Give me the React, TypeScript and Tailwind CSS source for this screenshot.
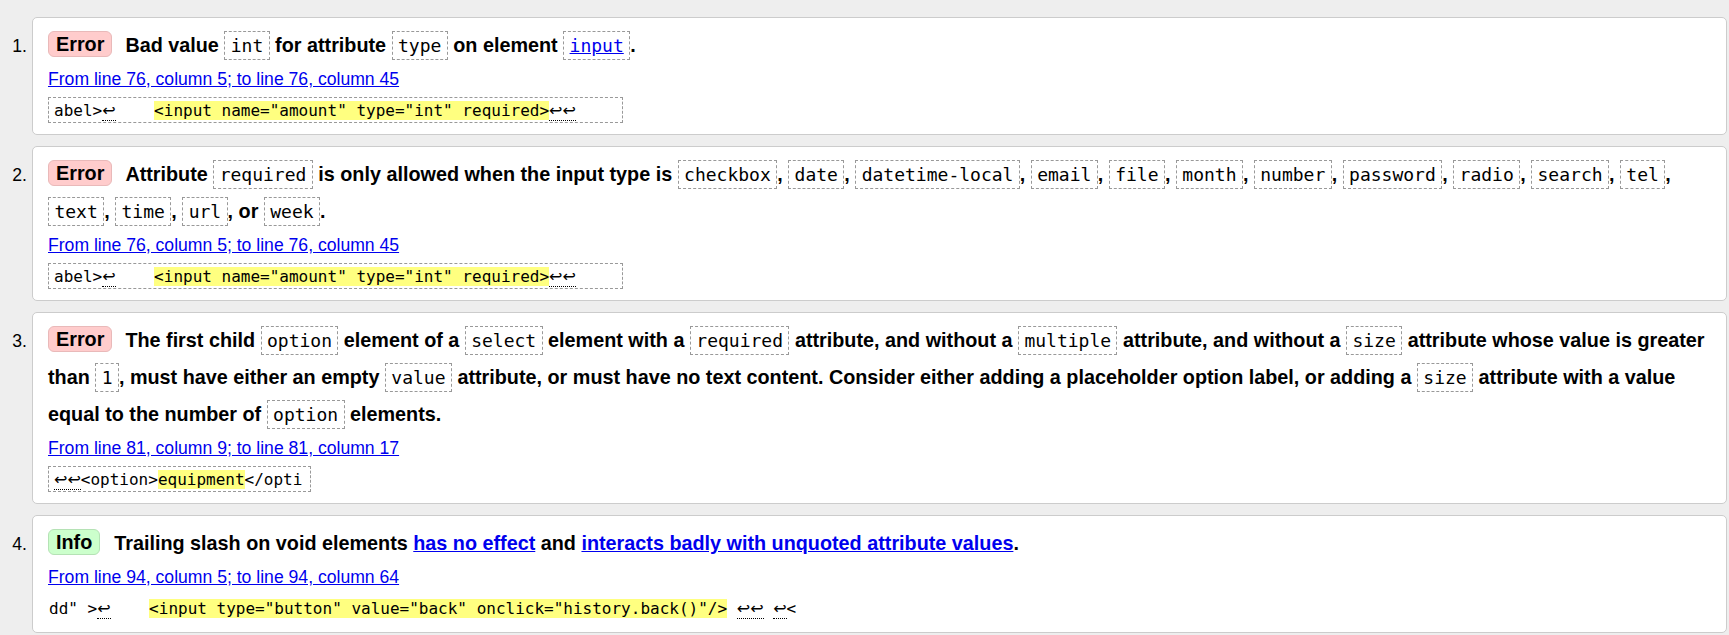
import React from "react";

const sans = { fontFamily: '"Liberation Sans", Arial, sans-serif' };

function C({ children }: { children: React.ReactNode }) {
  return (
    <code className="border border-dashed border-[#999] px-[5.4px] py-[3px] font-normal text-[18px] [font-family:'DejaVu_Sans_Mono',monospace]">
      {children}
    </code>
  );
}

function Ret({ n = 1 }: { n?: number }) {
  return (
    <span className="border-b border-dotted border-black [font-family:'DejaVu_Sans',sans-serif]">
      {"↩".repeat(n)}
    </span>
  );
}

function Hl({ children }: { children: React.ReactNode }) {
  return <span className="bg-[#ffff80]">{children}</span>;
}

function Badge({ kind }: { kind: "Error" | "Info" }) {
  const cls =
    kind === "Error"
      ? "bg-[#ffcccc] border-[#e9b9b9] mr-[13px]"
      : "bg-[#ccffcc] border-[#b5e2b5] mr-[14px]";
  return (
    <span className={`inline-block rounded-[6px] border px-[7px] leading-[24px] align-[1px] ${cls}`}>
      {kind}
    </span>
  );
}

function Item({
  n,
  kind,
  message,
  location,
  extract,
  boxed = true,
}: {
  n: number;
  kind: "Error" | "Info";
  message: React.ReactNode;
  location: string;
  extract: React.ReactNode;
  boxed?: boolean;
}) {
  return (
    <li className="flex items-baseline">
      <div className="w-[32px] shrink-0 pr-[5px] text-right text-[17.6px] text-black">{n}.</div>
      <div className="flex-1 rounded-[5px] border border-[#cccccc] bg-white pt-[9px] pb-[11px] pl-[15px] pr-[6px]">
        <p className="whitespace-nowrap text-[19.8px] font-bold leading-[37px] text-black">
          <Badge kind={kind} />
          {message}
        </p>
        <p className="mt-[2px] text-[17.6px] leading-[26px]">
          <a href="#" className="text-[#0000ee] underline">
            {location}
          </a>
        </p>
        <div
          className={`mt-[5px] w-fit whitespace-pre pt-[4px] pb-[2px] text-[16px] leading-[18px] text-black [font-family:'DejaVu_Sans_Mono',monospace] ${
            boxed ? "border border-dashed border-[#999] pl-[5px] pr-[8px]" : "border-y border-transparent pl-[1px]"
          }`}
        >
          {extract}
        </div>
      </div>
    </li>
  );
}

export default function App() {
  const amountExtract = (
    <>
      abel&gt;
      <Ret />
      {"    "}
      <Hl>&lt;input name="amount" type="int" required&gt;</Hl>
      <Ret n={2} />
      {"    "}
    </>
  );

  return (
    <div className="h-[635px] overflow-hidden bg-[#eeeeee] pt-[17px] pr-[2px]" style={sans}>
      <ol className="flex flex-col gap-[11px]">
        <Item
          n={1}
          kind="Error"
          message={
            <>
              Bad value <C>int</C> for attribute <C>type</C> on element{" "}
              <C>
                <a href="#" className="text-[#0000ee] underline">
                  input
                </a>
              </C>
              .
            </>
          }
          location="From line 76, column 5; to line 76, column 45"
          extract={amountExtract}
        />
        <Item
          n={2}
          kind="Error"
          message={
            <>
              Attribute <C>required</C> is only allowed when the input type is <C>checkbox</C>, <C>date</C>,{" "}
              <C>datetime-local</C>, <C>email</C>, <C>file</C>, <C>month</C>, <C>number</C>, <C>password</C>,{" "}
              <C>radio</C>, <C>search</C>, <C>tel</C>,
              <br />
              <C>text</C>, <C>time</C>, <C>url</C>, or <C>week</C>.
            </>
          }
          location="From line 76, column 5; to line 76, column 45"
          extract={amountExtract}
        />
        <Item
          n={3}
          kind="Error"
          message={
            <>
              The first child <C>option</C> element of a <C>select</C> element with a <C>required</C> attribute, and
              without a <C>multiple</C> attribute, and without a <C>size</C> attribute whose value is greater
              <br />
              than <C>1</C>, must have either an empty <C>value</C> attribute, or must have no text content. Consider
              either adding a placeholder option label, or adding a <C>size</C> attribute with a value
              <br />
              equal to the number of <C>option</C> elements.
            </>
          }
          location="From line 81, column 9; to line 81, column 17"
          extract={
            <>
              <Ret n={2} />
              &lt;option&gt;<Hl>equipment</Hl>&lt;/opti
            </>
          }
        />
        <Item
          n={4}
          kind="Info"
          boxed={false}
          message={
            <>
              Trailing slash on void elements{" "}
              <a href="#" className="text-[#0000ee] underline">
                has no effect
              </a>{" "}
              and{" "}
              <a href="#" className="text-[#0000ee] underline">
                interacts badly with unquoted attribute values
              </a>
              .
            </>
          }
          location="From line 94, column 5; to line 94, column 64"
          extract={
            <>
              dd" &gt;
              <Ret />
              {"    "}
              <Hl>&lt;input type="button" value="back" onclick="history.back()"/&gt;</Hl> <Ret n={2} /> <Ret />
              &lt;
            </>
          }
        />
      </ol>
    </div>
  );
}
